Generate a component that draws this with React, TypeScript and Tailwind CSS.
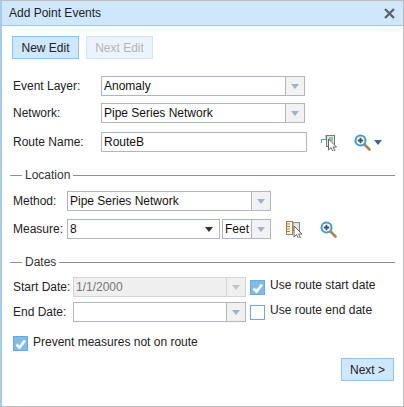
import React from "react";

const Arrow = ({ c = "#9fb1d0" }: { c?: string }) => (
  <svg width="9" height="5" viewBox="0 0 9 5" className="block"><path d="M0 0H8L4 5Z" fill={c} /></svg>
);

function Combo({ value, w, disabled, h = "h-[20px]", tw = "w-[19px]" }: { value: string; w: string; disabled?: boolean; h?: string; tw?: string }) {
  return (
    <div className={`flex ${h} ${w} border ${disabled ? "border-[#d4d4d4] bg-[#efefef] text-[#777]" : "border-[#aeb5c4] bg-white"}`}>
      <div className="flex-1 min-w-0 pl-[2px] leading-[18px] overflow-hidden whitespace-nowrap">{value}</div>
      <div className={`${tw} shrink-0 flex items-center justify-center border-l ${disabled ? "border-[#d4d4d4]" : "border-[#aeb5c4] bg-[#f2f2f2]"}`}>
        <Arrow c={disabled ? "#c4c4c4" : "#9fb1d0"} />
      </div>
    </div>
  );
}

function Section({ title }: { title: string }) {
  return (
    <div className="flex items-center h-[14px] ml-[-3px]">
      <div className="w-[12px] h-px bg-[#8f8f8f]" />
      <div className="px-[3px] text-[#333] leading-[14px]">{title}</div>
      <div className="flex-1 h-px bg-[#8f8f8f]" />
    </div>
  );
}

function Check({ checked }: { checked?: boolean }) {
  return (
    <div className={`w-[15px] h-[15px] shrink-0 border border-[#63ace6] ${checked ? "bg-[#82bbe8]" : "bg-white"}`}>
      {checked && (
        <svg viewBox="0 0 13 13" width="13" height="13" className="block">
          <path d="M2.5 7.5L5.5 10.5L11 3.5" stroke="#fff" strokeWidth="2.6" fill="none" />
        </svg>
      )}
    </div>
  );
}

const Magnifier = () => (
  <svg width="17" height="17" viewBox="0 0 17 17" className="block">
    <path d="M10.5 10.5L15.5 15.5" stroke="#b5834f" strokeWidth="2.6" strokeLinecap="round" />
    <circle cx="6.5" cy="6.5" r="5" fill="#fff" stroke="#3f9bd2" strokeWidth="2" />
    <path d="M3.8 6.5H9.2M6.5 3.8V9.2" stroke="#44505c" strokeWidth="1.8" />
  </svg>
);

const Cursor = () => (
  <path d="M0 0V11L2.6 8.6L4.4 12.5L6.4 11.6L4.6 8H8Z" fill="#fff" stroke="#666" strokeWidth="1" />
);

const PickRoute = () => (
  <svg width="17" height="17" viewBox="0 0 17 17" className="block">
    <path d="M0.5 9V5.5H5V1" stroke="#4f9bd9" fill="none" />
    <path d="M5 11.5H6" stroke="#4f9bd9" />
    <rect x="5.5" y="1.5" width="8" height="11" fill="#dfe8e0" stroke="#777" />
    <rect x="8" y="3" width="4" height="4" fill="#8fc79f" />
    <g transform="translate(7.5 5)"><Cursor /></g>
  </svg>
);

const PickMeasure = () => (
  <svg width="17" height="18" viewBox="0 0 17 18" className="block">
    <rect x="0.5" y="1.5" width="6" height="13" fill="#fdf6e6" stroke="#ad7c3c" />
    <path d="M1 4H4M1 6.5H4M1 9H4M1 11.5H4" stroke="#ad7c3c" />
    <rect x="7" y="2.5" width="6.5" height="8" fill="#dfe8e0" stroke="#888" />
    <g transform="translate(8 6)"><Cursor /></g>
  </svg>
);

export default function App() {
  const label = "shrink-0 text-[#222]";
  return (
    <div
      className="w-[404px] h-[407px] flex flex-col bg-white border-t border-r border-b border-t-[#bdbdbd] border-r-[#bdbdbd] border-b-[#bdbdbd] border-l-2 border-l-[#a5cbec] text-[12px] text-[#111]"
      style={{ fontFamily: '"Liberation Sans", Arial, sans-serif' }}
    >
      <div className="h-[25px] shrink-0 flex items-center justify-between pl-[7px] pr-[8px] bg-[#cfe7fb] border-b border-[#97c6ee] text-[#222]">
        <span>Add Point Events</span>
        <svg width="11" height="11" viewBox="0 0 11 11"><path d="M1 1L10 10M10 1L1 10" stroke="#5f6468" strokeWidth="2.4" /></svg>
      </div>

      <div className="flex-1 flex flex-col pl-[11px] pr-[8px] pt-[10px]">
        <div className="flex gap-[7px] ml-[-1px]">
          <button className="w-[67px] h-[23px] border border-[#8cc3f2] bg-[#cfe7fb] text-[#222]">New Edit</button>
          <button className="w-[67px] h-[23px] border border-[#cfe7fb] bg-[#ebf4fc] text-[#b5b5b5]">Next Edit</button>
        </div>

        <div className="flex items-center mt-[17px]">
          <div className={`${label} w-[88px]`}>Event Layer:</div>
          <Combo value="Anomaly" w="w-[204px]" />
        </div>
        <div className="flex items-center mt-[7px]">
          <div className={`${label} w-[88px]`}>Network:</div>
          <Combo value="Pipe Series Network" w="w-[204px]" />
        </div>
        <div className="flex items-center mt-[9px]">
          <div className={`${label} w-[88px]`}>Route Name:</div>
          <div className="w-[206px] h-[20px] border border-[#aeb5c4] pl-[2px] leading-[18px]">RouteB</div>
          <div className="ml-[14px]"><PickRoute /></div>
          <div className="ml-[16px]"><Magnifier /></div>
          <div className="ml-[3px]"><Arrow c="#44678f" /></div>
        </div>

        <div className="mt-[16px]"><Section title="Location" /></div>

        <div className="flex items-center mt-[9px]">
          <div className={`${label} w-[54px]`}>Method:</div>
          <Combo value="Pipe Series Network" w="w-[204px]" />
        </div>
        <div className="flex items-center mt-[8px]">
          <div className={`${label} w-[54px]`}>Measure:</div>
          <div className="flex h-[20px] w-[153px] border border-[#aeb5c4]">
            <div className="flex-1 pl-[2px] leading-[18px]">8</div>
            <div className="w-[19px] flex items-center justify-center"><Arrow c="#333" /></div>
          </div>
          <div className="ml-[2px]">
            <Combo value="Feet" w="w-[49px]" />
          </div>
          <div className="ml-[15px]"><PickMeasure /></div>
          <div className="ml-[17px]"><Magnifier /></div>
        </div>

        <div className="mt-[16px]"><Section title="Dates" /></div>

        <div className="flex items-center mt-[8px]">
          <div className={`${label} w-[60px]`}>Start Date:</div>
          <Combo value="1/1/2000" w="w-[173px]" disabled />
          <div className="ml-[4px]"><Check checked /></div>
          <div className="ml-[5px] mt-[-4px] text-[#222]">Use route start date</div>
        </div>
        <div className="flex items-center mt-[5px]">
          <div className={`${label} w-[60px]`}>End Date:</div>
          <Combo value="" w="w-[173px]" />
          <div className="ml-[4px]"><Check /></div>
          <div className="ml-[5px] mt-[-4px] text-[#222]">Use route end date</div>
        </div>

        <div className="flex items-center mt-[14px]">
          <Check checked />
          <div className="ml-[5px] mt-[-3px] text-[#222]">Prevent measures not on route</div>
        </div>

        <div className="flex justify-end mt-[7px] mr-[1px]">
          <button className="w-[53px] h-[23px] border border-[#8cc3f2] bg-[#cfe7fb] text-[#222]">Next &gt;</button>
        </div>
      </div>
    </div>
  );
}
